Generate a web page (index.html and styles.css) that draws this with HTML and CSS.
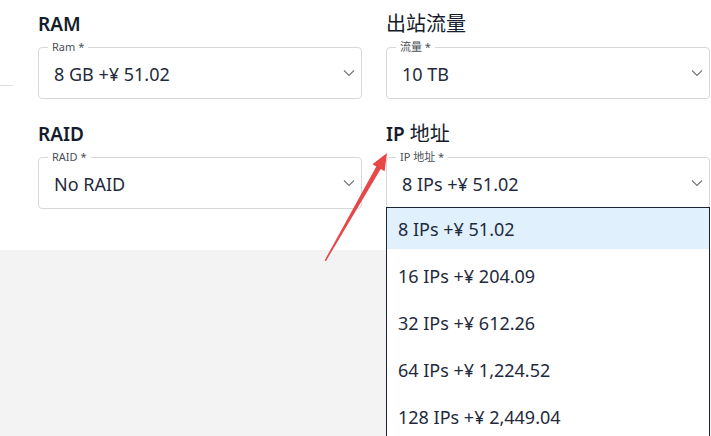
FILE: index.html
```html
<!DOCTYPE html>
<html lang="zh-CN">
<head>
<meta charset="utf-8">
<title>配置</title>
<link rel="stylesheet" href="styles.css">
</head>
<body>
<div class="page">
  <section class="panel">
    <div class="side-line"></div>
    <div class="grid">
      <div class="field">
        <h3 class="heading">RAM</h3>
        <div class="select">
          <span class="legend">Ram *</span>
          <span class="value">8 GB +¥ 51.02</span>
          <svg class="chev" width="12" height="8" viewBox="0 0 12 8"><path d="M1 1.5 L6 6.5 L11 1.5" fill="none" stroke="#6f737a" stroke-width="1.1"/></svg>
        </div>
      </div>
      <div class="field">
        <h3 class="heading"><span class="cjk">出站流量</span></h3>
        <div class="select">
          <span class="legend">流量 *</span>
          <span class="value">10 TB</span>
          <svg class="chev" width="12" height="8" viewBox="0 0 12 8"><path d="M1 1.5 L6 6.5 L11 1.5" fill="none" stroke="#6f737a" stroke-width="1.1"/></svg>
        </div>
      </div>
      <div class="field">
        <h3 class="heading">RAID</h3>
        <div class="select">
          <span class="legend">RAID *</span>
          <span class="value">No RAID</span>
          <svg class="chev" width="12" height="8" viewBox="0 0 12 8"><path d="M1 1.5 L6 6.5 L11 1.5" fill="none" stroke="#6f737a" stroke-width="1.1"/></svg>
        </div>
      </div>
      <div class="field">
        <h3 class="heading">IP <span class="cjk">地址</span></h3>
        <div class="select">
          <span class="legend">IP 地址 *</span>
          <span class="value">8 IPs +¥ 51.02</span>
          <svg class="chev" width="12" height="8" viewBox="0 0 12 8"><path d="M1 1.5 L6 6.5 L11 1.5" fill="none" stroke="#6f737a" stroke-width="1.1"/></svg>
          <ul class="menu">
            <li class="item active">8 IPs +¥ 51.02</li>
            <li class="item">16 IPs +¥ 204.09</li>
            <li class="item">32 IPs +¥ 612.26</li>
            <li class="item">64 IPs +¥ 1,224.52</li>
            <li class="item">128 IPs +¥ 2,449.04</li>
          </ul>
        </div>
      </div>
    </div>
  </section>
  <section class="lower"></section>
  <svg class="arrow" width="711" height="436" viewBox="0 0 711 436">
    <polygon points="324.6,260.5 376.3,166.4 372.4,164.2 387,153 384.6,171.2 380.7,168.9 326,261" fill="#e8474a"/>
  </svg>
</div>
</body>
</html>
```

FILE: styles.css
```css
html, body {
  margin: 0;
  padding: 0;
  height: 100%;
  overflow: hidden;
}
body {
  font-family: "Noto Sans", "Noto Sans CJK SC", sans-serif;
  color: #1c2434;
  background: #f3f3f3;
}
.page {
  position: relative;
  width: 711px;
  height: 436px;
  overflow: hidden;
}
.panel {
  position: relative;
  background: #ffffff;
  padding: 12px 1px 41px 38px;
}
.side-line {
  position: absolute;
  left: 0;
  top: 85px;
  width: 13px;
  height: 1px;
  background: #dcdcdc;
}
.grid {
  display: grid;
  grid-template-columns: 324px 324px;
  column-gap: 24px;
  row-gap: 23px;
}
.field {
  display: flex;
  flex-direction: column;
  gap: 11px;
}
.heading {
  margin: 0;
  height: 24px;
  font-size: 19px;
  line-height: 24px;
  font-weight: 600;
  color: #141c2b;
  white-space: nowrap;
}
.cjk {
  font-family: "Noto Sans CJK SC", sans-serif;
  font-weight: 400;
  font-size: 20px;
  line-height: 20px;
}
.select {
  position: relative;
  box-sizing: border-box;
  height: 52px;
  flex: none;
  border: 1px solid #d6d8db;
  border-radius: 4px;
  display: flex;
  align-items: center;
  padding: 0 6px 0 15px;
  background: #fff;
}
.legend {
  position: absolute;
  top: -8px;
  left: 9px;
  padding: 0 4px;
  background: #fff;
  font-size: 11px;
  line-height: 14px;
  color: #4a4f57;
}
.value {
  flex: 1;
  font-size: 18px;
  line-height: 24px;
  color: #1f2a3d;
  padding-top: 2px;
}
.chev {
  flex: none;
}
.menu {
  position: absolute;
  top: 49px;
  left: -1px;
  width: 322px;
  margin: 0;
  padding: 0;
  list-style: none;
  background: #fff;
  border: 1px solid #1b2535;
  height: 260px;
  z-index: 2;
}
.item {
  height: 41px;
  line-height: 41px;
  margin-bottom: 6px;
  padding: 1px 0 0 11px;
  box-sizing: border-box;
  font-size: 18px;
  color: #1f2a3d;
}
.item.active {
  background: #e0f0fd;
}
.arrow {
  position: absolute;
  left: 0;
  top: 0;
  z-index: 3;
  pointer-events: none;
}
```
